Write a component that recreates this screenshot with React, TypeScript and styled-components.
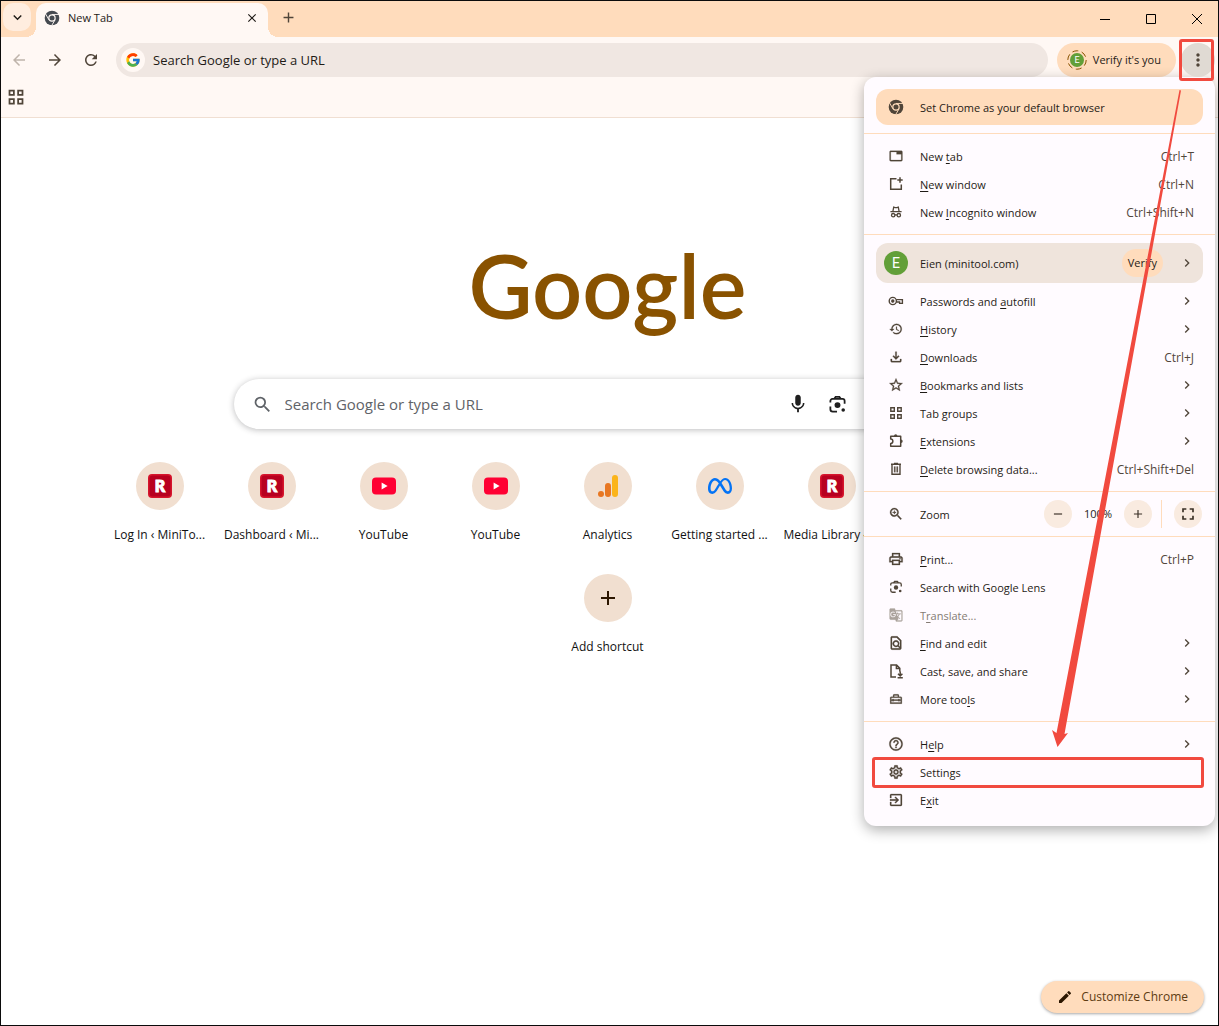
import React from 'react';
import styled, { createGlobalStyle, css } from 'styled-components';
import {
  MdOutlineTab, MdHistory, MdOutlineFileDownload, MdStarBorder, MdZoomIn,
  MdOutlinePrint, MdGTranslate, MdOutlineFindInPage, MdOutlineHomeRepairService, MdHelpOutline,
  MdOutlineSettings, MdExitToApp, MdMic, MdSearch, MdEdit, MdArrowBack, MdArrowForward, MdRefresh,
  MdMoreVert, MdFullscreen, MdChevronRight, MdAdd, MdRemove, MdClose, MdKeyboardArrowDown,
} from 'react-icons/md';
import { FcGoogle } from 'react-icons/fc';
import { FaMeta } from 'react-icons/fa6';

const color = {
  strip: '#ffdcbc',
  toolbar: '#fff8f4',
  field: '#f0e7e2',
  menu: '#fffbff',
  line: '#ffdcbc',
  hover: '#efe4dc',
  tile: '#f1dfd0',
  text: '#1f1b16',
  muted: '#51463c',
  icon: '#504539',
  brown: '#895200',
  mark: '#f14a3f',
  green: '#629f38',
};

const Global = createGlobalStyle`
  *, *::before, *::after { box-sizing: border-box; }
  html, body, #root { height: 100%; }
  body { margin: 0; background: #fff; color: ${color.text}; font: 11px/16px "Segoe UI", "Open Sans", "Noto Sans", sans-serif; }
  button, input { font: inherit; color: inherit; }
  button { border: 0; padding: 0; background: none; cursor: pointer; }
  a { color: inherit; text-decoration: none; }
  svg { display: block; flex: none; }
`;

const Window = styled.div`
  position: relative;
  display: flex;
  flex-direction: column;
  min-height: 100%;
  border: 1px solid #0b0b0b;
`;

const TabStrip = styled.div`
  display: flex;
  align-items: center;
  height: 36px;
  padding-left: 2px;
  overflow: hidden;
  background: ${color.strip};
`;

const TabSearch = styled.button`
  display: grid;
  place-items: center;
  width: 28px;
  height: 28px;
  margin-bottom: 4px;
  border-radius: 10px;
  background: #ffeddf;
`;

const Tab = styled.div`
  position: relative;
  display: flex;
  align-items: center;
  gap: 8px;
  align-self: flex-end;
  width: 232px;
  height: 34px;
  margin-left: 5px;
  padding: 0 8px 5px;
  border-radius: 10px 10px 0 0;
  background: ${color.toolbar};

  &::before, &::after {
    content: '';
    position: absolute;
    bottom: 0;
    width: 10px;
    height: 10px;
  }
  &::before { right: 100%; background: radial-gradient(circle at 0 0, transparent 10px, ${color.toolbar} 10px); }
  &::after { left: 100%; background: radial-gradient(circle at 100% 0, transparent 10px, ${color.toolbar} 10px); }
`;

const TabTitle = styled.span` flex: 1; `;

const PlainButton = styled.button<{ $w: number; $h: number }>`
  display: grid;
  place-items: center;
  width: ${p => p.$w}px;
  height: ${p => p.$h}px;
  border-radius: 50%;
  color: ${color.icon};
  &:disabled { color: #bfb4ab; }
`;

const NewTab = styled(PlainButton)` margin: 0 0 4px 6px; `;

const WindowButtons = styled.div`
  display: flex;
  margin: 0 -2px 0 auto;
`;

const WindowButton = styled.button`
  display: grid;
  place-items: center;
  width: 46px;
  height: 34px;
`;

const Toolbar = styled.div`
  display: flex;
  align-items: center;
  padding: 6px 3px 0 0;
  background: ${color.toolbar};
`;

const Omnibox = styled.div`
  display: flex;
  flex: 1;
  align-items: center;
  gap: 8px;
  height: 34px;
  margin: 0 9px 0 7px;
  padding: 0 5px;
  border-radius: 17px;
  background: ${color.field};
`;

const GoogleBadge = styled.span`
  display: grid;
  place-items: center;
  width: 24px;
  height: 24px;
  border-radius: 50%;
  background: ${color.toolbar};
`;

const Field = styled.input<{ $size: number; $tint: string }>`
  flex: 1;
  min-width: 0;
  height: 28px;
  padding: 0;
  border: 0;
  outline: 0;
  background: none;
  font-size: ${p => p.$size}px;
  line-height: 28px;
  &::placeholder { color: ${p => p.$tint}; opacity: 1; }
`;

const VerifyPill = styled.button`
  display: flex;
  align-items: center;
  gap: 6px;
  height: 34px;
  margin-right: 5px;
  padding: 0 15px 0 10px;
  border-radius: 17px;
  background: ${color.strip};
`;

const MenuButton = styled(PlainButton)`
  position: relative;
  z-index: 2;
  background: #e0dad3;
`;

const Highlight = styled.span<{ $inset: string }>`
  position: absolute;
  inset: ${p => p.$inset};
  border: 3px solid ${color.mark};
  border-radius: 3px;
  pointer-events: none;
`;

const BookmarkBar = styled.div`
  display: flex;
  align-items: center;
  height: 41px;
  padding-left: 3px;
  border-bottom: 1px solid #f0dfd2;
  background: ${color.toolbar};
`;

const Page = styled.main`
  display: flex;
  flex: 1;
  flex-direction: column;
  align-items: center;
  padding-right: 4px;
`;

const Wordmark = styled.h1`
  margin: 117px 0 0;
  color: ${color.brown};
  font: 600 88px/100px Lato, sans-serif;
`;

const SearchBox = styled.label`
  display: flex;
  align-items: center;
  width: 748px;
  max-width: 100%;
  height: 50px;
  margin-top: 44px;
  padding: 0 124px 0 18px;
  border-radius: 25px;
  box-shadow: 0 1px 6px rgba(32, 33, 36, 0.3);
  color: #5f6368;
  background: #fff;
`;

const SearchField = styled(Field)` margin-left: 12px; `;

const SearchTool = styled(PlainButton)` color: #1f1f1f; `;

const Shortcuts = styled.nav`
  display: grid;
  grid-template-columns: repeat(9, 112px);
  justify-content: center;
  margin-top: 33px;
`;

const shortcutStyle = css`
  display: flex;
  flex-direction: column;
  align-items: center;
  gap: 17px;
  height: 112px;
  color: #111;
  font-size: 12px;
  white-space: nowrap;
`;
const Shortcut = styled.a`${shortcutStyle}`;
const AddShortcut = styled.button`
  ${shortcutStyle}
  grid-column: 5;
`;

const Tile = styled.span`
  display: grid;
  place-items: center;
  width: 48px;
  height: 48px;
  border-radius: 50%;
  color: #2c1600;
  background: ${color.tile};
`;

const Customize = styled.button`
  display: flex;
  align-items: center;
  align-self: flex-end;
  gap: 8px;
  height: 32px;
  margin: auto 10px 12px 0;
  padding: 0 16px;
  border-radius: 16px;
  color: #5d3b12;
  background: ${color.strip};
  box-shadow: 0 1px 3px rgba(0, 0, 0, 0.35);
  font-size: 12px;
  svg { color: #2c1600; }
`;

const Menu = styled.div`
  position: absolute;
  z-index: 1;
  top: 76px;
  right: 3px;
  width: 351px;
  padding: 12px 0;
  border-radius: 12px;
  background: ${color.menu};
  box-shadow: 0 4px 14px rgba(0, 0, 0, 0.32);
`;

const Promo = styled.button`
  display: flex;
  align-items: center;
  gap: 16px;
  width: calc(100% - 24px);
  height: 36px;
  margin: 0 12px;
  padding: 0 12px;
  border-radius: 12px;
  text-align: left;
  background: ${color.strip};
`;

const Group = styled.div`
  margin-top: 8px;
  padding-top: 8px;
  border-top: 1px solid ${color.line};
`;

const Item = styled.button`
  position: relative;
  display: flex;
  align-items: center;
  gap: 16px;
  width: 100%;
  height: 28px;
  padding: 0 21px 0 24px;
  text-align: left;
  &:disabled { color: #857b74; }
  &:disabled svg { color: #aaa29c; }
`;

const ItemIcon = styled.span`
  display: grid;
  place-items: center;
  width: 16px;
  color: ${color.icon};
  svg[stroke-width='0'] { stroke-width: 0.4px; }
  path[fill='none'] { stroke: none; }
`;

const ItemLabel = styled.span`
  flex: 1;
  padding-top: 1px;
  u { text-underline-offset: 2px; }
`;

const Keys = styled.kbd`
  padding-top: 1px;
  color: ${color.muted};
  font: inherit;
  font-size: 12px;
`;

const Chevron = styled(MdChevronRight)`
  margin-right: -1px;
  color: ${color.icon};
`;

const Profile = styled.button`
  display: flex;
  align-items: center;
  gap: 12px;
  width: calc(100% - 24px);
  height: 40px;
  margin: 0 12px 4px;
  padding: 0 9px 0 8px;
  border-radius: 12px;
  text-align: left;
  background: ${color.hover};
`;

const Avatar = styled.span`
  display: grid;
  place-items: center;
  width: 24px;
  height: 24px;
  border-radius: 50%;
  background: ${color.green};
  color: #fff;
  font: 14px/24px Roboto, sans-serif;
`;

const VerifyTag = styled.span`
  margin-right: 4px;
  padding: 6px;
  border-radius: 14px;
  background: ${color.strip};
`;

const ZoomRow = styled.div`
  display: flex;
  align-items: center;
  gap: 16px;
  padding: 0 13px 0 24px;
`;

const ZoomControls = styled.div`
  display: flex;
  align-items: center;
`;

const RoundButton = styled.button`
  display: grid;
  place-items: center;
  width: 28px;
  height: 28px;
  border-radius: 50%;
  color: #3a3026;
  background: #f9ebe0;
`;

const ZoomValue = styled.output`
  width: 52px;
  text-align: center;
`;

const Separator = styled.span`
  width: 1px;
  height: 28px;
  margin: 0 12px 0 9px;
  background: ${color.line};
`;

const Arrow = styled.svg`
  position: absolute;
  top: 13px;
  right: 31px;
  pointer-events: none;
`;

const ChromeIcon = ({ size = 16, tint = color.icon, gap = color.toolbar }) => (
  <svg width={size} height={size} viewBox="0 0 24 24">
    <circle cx="12" cy="12" r="11" fill={tint} />
    <g stroke={gap} strokeWidth="1.4" fill="none">
      <path d="M12 6.7h11M7.4 14.7 1.9 5.1M16.6 14.7 11 24.3" />
    </g>
    <circle cx="12" cy="12" r="5.6" fill={gap} />
    <circle cx="12" cy="12" r="3.8" fill={tint} />
  </svg>
);

const Stroke = ({ children, size = 16, width = 1.5 }: { children: React.ReactNode; size?: number; width?: number }) => (
  <svg width={size} height={size} viewBox="0 0 16 16" fill="none" stroke="currentColor" strokeWidth={width}>{children}</svg>
);

const NewWindowIcon = () => (
  <Stroke><path d="M8.5 2.7H2.7v10.6h10.6V8.5M12 1.3v5.4M9.3 4h5.4" /></Stroke>
);
const IncognitoIcon = () => (
  <Stroke width={1.3}>
    <path d="M2.4 7.6h11.2M4.9 7.4l.8-4.2 1.4.5h1.8l1.4-.5.8 4.2" />
    <circle cx="5.2" cy="11.2" r="1.7" /><circle cx="10.8" cy="11.2" r="1.7" /><path d="M6.8 10.9h2.4" />
  </Stroke>
);
const KeyIcon = () => (
  <Stroke width={1.4}>
    <circle cx="4.8" cy="8" r="3.6" /><circle cx="4.8" cy="8" r="1" fill="currentColor" />
    <path d="M8.2 6.6h6.2v3.8h-2.8V9H8.4" />
  </Stroke>
);
const GridIcon = ({ size = 16 }) => (
  <Stroke size={size} width={1.4}>
    <path d="M2.8 2.8h3.5v3.5H2.8zM9.7 2.8h3.5v3.5H9.7zM2.8 9.7h3.5v3.5H2.8zM9.7 9.7h3.5v3.5H9.7z" />
  </Stroke>
);
const PuzzleIcon = () => (
  <Stroke>
    <path d="M2.7 3.2h10v10h-10v-2.8a2.1 2.1 0 0 0 0-4.3z" strokeLinejoin="round" />
    <path d="M6 3a1.7 1.7 0 0 1 3.4 0zM13 6.5a1.7 1.7 0 0 1 0 3.4z" fill="currentColor" stroke="none" />
  </Stroke>
);
const TrashIcon = () => (
  <Stroke width={1.4}>
    <path d="M4 3.8v9.4h8V3.8M3 3.3h10M6 2.4h4" />
    <path d="M6.4 5.4v6M8 5.4v6M9.6 5.4v6" strokeWidth="1" />
  </Stroke>
);
const LensIcon = ({ size = 16 }) => (
  <Stroke size={size} width={1.5}>
    <path d="M2 6.4V5a1.7 1.7 0 0 1 1.7-1.7h8.6A1.7 1.7 0 0 1 14 5v2.4M2 9.6V12a2 2 0 0 0 2 2h3.6M5.4 3l1-1.4h3.2l1 1.4" />
    <circle cx="8" cy="8.5" r="2.5" fill="currentColor" stroke="none" />
    <circle cx="12.8" cy="12.6" r="1.5" fill="currentColor" stroke="none" />
  </Stroke>
);
const SavePageIcon = () => (
  <Stroke>
    <path d="M8 14H3V2h5.6l3.2 3.2v3.4M8.4 2.2v3.2h3.2M12.2 8.6v4M10 10.8l2.2 2.1 2.2-2.1M9.6 14.8h5.2" />
  </Stroke>
);
const RedTile = () => (
  <svg width="24" height="24" viewBox="0 0 24 24" fontFamily="Lato, sans-serif" fontWeight="900" fontSize="16">
    <rect width="24" height="24" rx="4" fill="#d6152c" />
    <rect x="1.5" y="1.5" width="21" height="21" rx="3" fill="#b8001f" />
    <text x="12" y="18" textAnchor="middle" fill="#fff" stroke="#fff" strokeWidth="1">R</text>
  </svg>
);
const YouTubeIcon = () => (
  <svg width="24" height="24" viewBox="0 0 24 24">
    <rect y="3.6" width="24" height="16.8" rx="4" fill="#ff0033" /><path d="M9.6 8.6v6.8l6-3.4z" fill="#fff" />
  </svg>
);
const AnalyticsIcon = () => (
  <svg width="24" height="24" viewBox="0 0 24 24">
    <rect x="16" y="1" width="6" height="22" rx="3" fill="#fbb41a" />
    <rect x="9" y="9" width="6" height="14" rx="3" fill="#e87722" />
    <circle cx="5" cy="20" r="3" fill="#e87722" />
  </svg>
);
const VerifyAvatar = () => (
  <svg width="20" height="20" viewBox="0 0 20 20" fontFamily="Roboto, sans-serif" fontSize="9">
    <circle cx="10" cy="10" r="9.2" fill="none" stroke="#895200" strokeDasharray="6 3.6" />
    <circle cx="10" cy="10" r="7" fill={color.green} />
    <text x="10" y="13" textAnchor="middle" fill="#fff">E</text>
  </svg>
);

type Entry = { icon: React.ReactNode; label: string; keys?: string; more?: boolean; disabled?: boolean; marked?: boolean };

const windowItems: Entry[] = [
  { icon: <MdOutlineTab size={14} />, label: 'New _tab', keys: 'Ctrl+T' },
  { icon: <NewWindowIcon />, label: '_New window', keys: 'Ctrl+N' },
  { icon: <IncognitoIcon />, label: 'New _Incognito window', keys: 'Ctrl+Shift+N' },
];
const dataItems: Entry[] = [
  { icon: <KeyIcon />, label: 'Passwords and _autofill', more: true },
  { icon: <MdHistory size={14} />, label: '_History', more: true },
  { icon: <MdOutlineFileDownload size={16} />, label: '_Downloads', keys: 'Ctrl+J' },
  { icon: <MdStarBorder size={16} />, label: '_Bookmarks and lists', more: true },
  { icon: <GridIcon />, label: 'Tab groups', more: true },
  { icon: <PuzzleIcon />, label: '_Extensions', more: true },
  { icon: <TrashIcon />, label: '_Delete browsing data...', keys: 'Ctrl+Shift+Del' },
];
const pageItems: Entry[] = [
  { icon: <MdOutlinePrint size={16} />, label: '_Print...', keys: 'Ctrl+P' },
  { icon: <LensIcon size={14} />, label: 'Search with Google Lens' },
  { icon: <MdGTranslate size={14} />, label: 'T_ranslate...', disabled: true },
  { icon: <MdOutlineFindInPage size={16} />, label: '_Find and edit', more: true },
  { icon: <SavePageIcon />, label: 'Cast, save, and share', more: true },
  { icon: <MdOutlineHomeRepairService size={14} />, label: 'More too_ls', more: true },
];
const appItems: Entry[] = [
  { icon: <MdHelpOutline size={16} />, label: 'H_elp', more: true },
  { icon: <MdOutlineSettings size={16} />, label: 'Settin_gs', marked: true },
  { icon: <MdExitToApp size={16} />, label: 'E_xit' },
];

const shortcuts = [
  { icon: <RedTile />, label: 'Log In ‹ MiniTo...' },
  { icon: <RedTile />, label: 'Dashboard ‹ Mi...' },
  { icon: <YouTubeIcon />, label: 'YouTube' },
  { icon: <YouTubeIcon />, label: 'YouTube' },
  { icon: <AnalyticsIcon />, label: 'Analytics' },
  { icon: <FaMeta size={24} color="#0473f5" />, label: 'Getting started ...' },
  { icon: <RedTile />, label: 'Media Library ‹ ...' },
];

/* An underscore marks the letter after it as the access key. */
const AccessLabel = ({ text }: { text: string }) => {
  const at = text.indexOf('_');
  if (at < 0) return <ItemLabel>{text}</ItemLabel>;
  return <ItemLabel>{text.slice(0, at)}<u>{text[at + 1]}</u>{text.slice(at + 2)}</ItemLabel>;
};

const Items = ({ entries }: { entries: Entry[] }) => (
  <>
    {entries.map(e => (
      <Item key={e.label} role="menuitem" disabled={e.disabled}>
        <ItemIcon>{e.icon}</ItemIcon>
        <AccessLabel text={e.label} />
        {e.keys && <Keys>{e.keys}</Keys>}
        {e.more && <Chevron size={16} />}
        {e.marked && <Highlight $inset="-1px 11px -2px 8px" />}
      </Item>
    ))}
  </>
);

export default function App() {
  return (
    <Window>
      <Global />
      <TabStrip>
        <TabSearch aria-label="Search tabs"><MdKeyboardArrowDown size={17} /></TabSearch>
        <Tab>
          <ChromeIcon tint="#454a50" />
          <TabTitle>New Tab</TabTitle>
          <PlainButton $w={16} $h={16} aria-label="Close tab"><MdClose size={14} color="#1f1b16" /></PlainButton>
        </Tab>
        <NewTab $w={28} $h={28} aria-label="New tab"><MdAdd size={17} /></NewTab>
        <WindowButtons>
          <WindowButton aria-label="Minimize"><svg width="10" height="10"><path d="M0 5.5h10" stroke="#000" /></svg></WindowButton>
          <WindowButton aria-label="Maximize"><svg width="10" height="10"><path d="M.5.5h9v9h-9z" fill="none" stroke="#000" /></svg></WindowButton>
          <WindowButton aria-label="Close"><svg width="10" height="10"><path d="M0 0l10 10M10 0L0 10" stroke="#000" /></svg></WindowButton>
        </WindowButtons>
      </TabStrip>

      <Toolbar>
        <PlainButton $w={36} $h={34} aria-label="Back" disabled><MdArrowBack size={18} /></PlainButton>
        <PlainButton $w={36} $h={34} aria-label="Forward"><MdArrowForward size={18} /></PlainButton>
        <PlainButton $w={36} $h={34} aria-label="Reload"><MdRefresh size={18} /></PlainButton>
        <Omnibox>
          <GoogleBadge><FcGoogle size={16} /></GoogleBadge>
          <Field $size={13} $tint={color.text} aria-label="Address" placeholder="Search Google or type a URL" />
        </Omnibox>
        <VerifyPill><VerifyAvatar />Verify it's you</VerifyPill>
        <MenuButton $w={34} $h={34} aria-label="Menu">
          <MdMoreVert size={20} />
          <Highlight $inset="-4px 1px -4px -2px" />
        </MenuButton>
      </Toolbar>
      <BookmarkBar>
        <PlainButton $w={24} $h={24} aria-label="Tab groups"><GridIcon size={20} /></PlainButton>
      </BookmarkBar>

      <Page>
        <Wordmark>Google</Wordmark>
        <SearchBox>
          <MdSearch size={21} />
          <SearchField $size={15} $tint="#5f6368" aria-label="Search" placeholder="Search Google or type a URL" />
          <SearchTool $w={40} $h={40} aria-label="Voice search"><MdMic size={22} /></SearchTool>
          <SearchTool $w={40} $h={40} aria-label="Image search"><LensIcon size={19} /></SearchTool>
        </SearchBox>
        <Shortcuts>
          {shortcuts.map((s, i) => (
            <Shortcut key={i} href="#"><Tile>{s.icon}</Tile>{s.label}</Shortcut>
          ))}
          <AddShortcut><Tile><MdAdd size={24} /></Tile>Add shortcut</AddShortcut>
        </Shortcuts>
        <Customize><MdEdit size={16} />Customize Chrome</Customize>
      </Page>

      <Menu role="menu">
        <Promo><ChromeIcon gap={color.strip} /><ItemLabel>Set Chrome as your default browser</ItemLabel></Promo>
        <Group><Items entries={windowItems} /></Group>
        <Group>
          <Profile>
            <Avatar>E</Avatar>
            <ItemLabel>Eien (minitool.com)</ItemLabel>
            <VerifyTag>Verify</VerifyTag>
            <Chevron size={16} />
          </Profile>
          <Items entries={dataItems} />
        </Group>
        <Group>
          <ZoomRow>
            <ItemIcon><MdZoomIn size={16} /></ItemIcon>
            <ItemLabel>Zoom</ItemLabel>
            <ZoomControls>
              <RoundButton aria-label="Zoom out"><MdRemove size={14} /></RoundButton>
              <ZoomValue>100%</ZoomValue>
              <RoundButton aria-label="Zoom in"><MdAdd size={14} /></RoundButton>
              <Separator />
              <RoundButton aria-label="Full screen"><MdFullscreen size={20} /></RoundButton>
            </ZoomControls>
          </ZoomRow>
        </Group>
        <Group><Items entries={pageItems} /></Group>
        <Group><Items entries={appItems} /></Group>
        <Arrow width="134" height="657" viewBox="0 0 134 657" fill={color.mark}>
          <path d="M129.5 0 L131 .5 L14.5 644 L18 643 L7.5 657 L2 640 L6.5 643z" />
        </Arrow>
      </Menu>
    </Window>
  );
}
